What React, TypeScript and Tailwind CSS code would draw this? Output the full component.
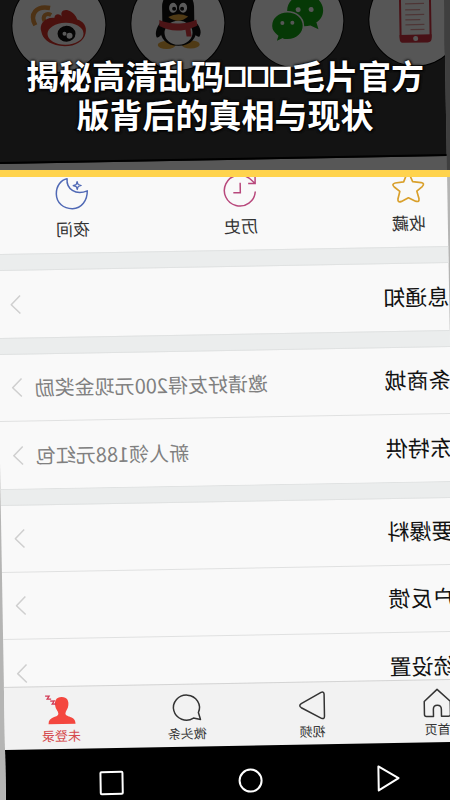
import React from 'react';

const cjk = "font-['Noto_Sans_CJK_SC',sans-serif]";

function Mirrored({ children, className = '' }: { children: React.ReactNode; className?: string }) {
  return <span className={`inline-block -scale-x-100 whitespace-nowrap ${className}`}>{children}</span>;
}

function Weibo() {
  return (
    <svg viewBox="0 5 93 93" className="h-full w-full" aria-hidden="true">
      <g fill="none" stroke="#dd8f3c" strokeLinecap="butt">
        <path d="M23 51C17 40 24 31 38 34" strokeWidth="4.5" />
        <path d="M32 47c-2-5 2-9 7-6" strokeWidth="4" />
      </g>
      <path d="M29 58C26 50 33 43 42 44C43 39 48 40 50 43C47 37 53 34 59 38C63 41 64 43 65 46C71 48 75 53 73 60C71 69 60 74 47 72C36 70 30 64 29 58Z" fill="#d5332a" />
      <ellipse cx="53" cy="60" rx="18" ry="11" fill="#f7f7f7" />
      <ellipse cx="54" cy="60" rx="9" ry="8" fill="#111" />
      <circle cx="52" cy="60" r="2" fill="#fff" />
      <circle cx="57" cy="62" r="3" fill="#fff" />
    </svg>
  );
}

function Penguin() {
  return (
    <svg viewBox="0 4 93 93" className="h-full w-full" aria-hidden="true">
      <ellipse cx="35" cy="72" rx="9" ry="4" fill="#e2a63c" />
      <ellipse cx="59" cy="72" rx="9" ry="4" fill="#e2a63c" />
      <path d="M30 48c-4 5-7 11-5 16 2 1 4-1 6-4zM63 48c5 5 8 11 5 16-2 1-4-1-6-4z" fill="#111" />
      <path d="M31 48V34a16 17 0 0 1 32 0v14c5 9 2 25-16 25s-21-16-16-25z" fill="#111" />
      <ellipse cx="47" cy="60" rx="14" ry="12" fill="#f7f7f7" />
      <path d="M28 47c10 5 28 5 37 0l1 6c-4 2-5 2-7 3l1 8h-5l-1-7c-10 2-19 0-26-4z" fill="#d63a40" />
      <ellipse cx="42" cy="35" rx="4" ry="5" fill="#fff" />
      <ellipse cx="52" cy="35" rx="4" ry="5" fill="#fff" />
      <circle cx="43" cy="36" r="2" fill="#111" />
      <circle cx="51" cy="36" r="2" fill="#111" />
      <path d="M37 44q10-5 20 0q-10 8-20 0z" fill="#e2a63c" />
    </svg>
  );
}

function Wechat() {
  return (
    <svg viewBox="1 0 93 93" className="h-full w-full" aria-hidden="true">
      <path d="M56 20c10 0 18 7 18 16 0 5-3 10-7 12l2 7-8-4c-13 3-23-5-23-15 0-9 8-16 18-16z" fill="#13a313" />
      <path d="M38 37c9 0 16 6 16 14s-7 14-16 14c-2 0-4 0-5-1l-7 3 2-6c-4-3-6-6-6-10 0-8 7-14 16-14z" fill="#13a313" stroke="#f7f7f7" strokeWidth="1.5" />
      <g fill="#f7f7f7">
        <circle cx="49" cy="35" r="2.5" /><circle cx="62" cy="35" r="2.5" />
        <circle cx="33" cy="48" r="2" /><circle cx="43" cy="48" r="2" />
      </g>
    </svg>
  );
}

function Handset() {
  return (
    <svg viewBox="1 2 93 93" className="h-full w-full" aria-hidden="true">
      <rect x="32" y="12" width="30" height="58" rx="4" fill="#f7f7f7" stroke="#cf3340" strokeWidth="2" />
      <path d="M31 64h32v4a4 4 0 0 1-4 4H35a4 4 0 0 1-4-4z" fill="#cf3340" />
      <circle cx="47" cy="68" r="2.5" fill="#f7f7f7" />
      <path d="M37 33h19M37 39h15M37 44h19M37 49h15M37 54h19M42 59h14" stroke="#d99" strokeWidth="1.3" />
    </svg>
  );
}

const line = 'h-8 w-8 fill-none overflow-visible';

function Moon() {
  return (
    <svg viewBox="0 0 32 32" className={line} stroke="#5069b5" strokeWidth="1.5" strokeLinejoin="round" aria-hidden="true">
      <path d="M11 1C10 11 19 18 31 13.500C31 23 25 31 16 31C7 31 0 25 0 16C0 8 5 2 11 1Z" />
      <path d="M21 4l1 3 3 1-3 1-1 3-1-3-3-1 3-1z" strokeWidth="1.2" />
    </svg>
  );
}

function History() {
  return (
    <svg viewBox="0 0 32 32" className={line} stroke="#b8487c" strokeWidth="1.5" aria-hidden="true">
      <path d="M31 17A15.500 15.500 0 1 1 25 3.500L31 9M31 2v7h-7M16 8v10H9" />
    </svg>
  );
}

function Star() {
  return (
    <svg viewBox="0 0 32 32" className={line} stroke="#d9a02c" strokeWidth="1.7" strokeLinejoin="round" aria-hidden="true">
      <path d="M16 1Q17 1 18 4L20.500 10L29 11Q33 12 30 15L24.500 19.500L26.500 27Q27 31 23 29.500L16 26L9 29.500Q5 31 5.500 27L7.500 19.500L2 15Q-1 12 3 11L11.500 10L14 4Q15 1 16 1Z" />
    </svg>
  );
}

const tools = [
  { label: '夜间', icon: <Moon /> },
  { label: '历史', icon: <History /> },
  { label: '收藏', icon: <Star /> },
];

const groups = [
  [{ label: '息通知', note: '' }],
  [
    { label: '条商城', note: '邀请好友得200元现金奖励' },
    { label: '东特供', note: '新人领188元红包' },
  ],
  [
    { label: '要爆料', note: '' },
    { label: '户反馈', note: '' },
    { label: '统设置', note: '' },
  ],
];

const tabIcon = 'h-7 w-7 fill-none overflow-visible';

const tabs = [
  {
    label: '未登录',
    color: 'text-[#d5494c]',
    icon: (
      <svg viewBox="0 0 28 28" className={tabIcon} aria-hidden="true">
        <path d="M14.500 1C20 1 22 5 21 10C21 13 18 15 18 18C19 22 28 20 28 28H1C1 20 10 22 11 18C11 15 8 13 8 10C7 5 9 1 14.500 1Z" fill="#f4473f" />
        <path d="M-2 0h4l-2 3h4M3 5h4l-2 3h4" stroke="#d23a55" strokeWidth="1.3" />
      </svg>
    ),
  },
  {
    label: '微头条',
    color: 'text-[#333]',
    icon: (
      <svg viewBox="0 0 28 28" className={tabIcon} stroke="#333" strokeWidth="1.5" strokeLinejoin="round" aria-hidden="true">
        <path d="M26 19A13 12.500 0 1 0 21 24.500L28 26Z" />
      </svg>
    ),
  },
  {
    label: '视频',
    color: 'text-[#333]',
    icon: (
      <svg viewBox="0 0 28 28" className={tabIcon} stroke="#333" strokeWidth="1.5" strokeLinejoin="round" aria-hidden="true">
        <path d="M3 12L23 1Q26 0 26 3V25Q26 28 23 27L3 16Q0 14 3 12Z" />
      </svg>
    ),
  },
  {
    label: '首页',
    color: 'text-[#333]',
    icon: (
      <svg viewBox="0 0 28 28" className={tabIcon} stroke="#333" strokeWidth="1.5" strokeLinejoin="round" aria-hidden="true">
        <path d="M14 0L1 12V25Q1 27 3 27H10V20Q10 16 14 16T18 20V27H25Q27 27 27 25V12Z" />
      </svg>
    ),
  },
];

function Row({ label, note }: { label: string; note: string }) {
  return (
    <a href="#" className="flex h-[67px] items-center border-b border-[#e0e1e1] pl-[13px] last:border-b-0">
      <svg viewBox="0 0 11 20" className="h-5 w-[11px] fill-none stroke-[#cfcfcf]" strokeWidth="1.5" aria-hidden="true">
        <path d="M10 1L1 10L10 19" />
      </svg>
      {note && <Mirrored className="ml-3 text-[20px] leading-7 text-[#808080]">{note}</Mirrored>}
      <Mirrored className="mb-1 ml-auto text-[22px] leading-8 text-[#111]">{label}</Mirrored>
    </a>
  );
}

export default function App() {
  return (
    <main className={`relative h-screen overflow-hidden bg-[#b5b5b4] ${cjk}`}>
      <div className="-mx-px -mt-2 -rotate-1 overflow-hidden bg-[#f9f9f9]">
        <div className="flex h-[168px] gap-[26px] overflow-hidden border-b-2 border-black bg-[#383838] pl-5">
          {[Weibo, Penguin, Wechat, Handset].map((Logo, i) => (
            <div key={i} className="-mt-4 h-[93px] w-[93px] shrink-0 rounded-full bg-[#f7f7f7] ring-1 ring-black">
              <Logo />
            </div>
          ))}
        </div>

        <div className="flex h-[90px] justify-between pt-[15px] pr-[19px] pl-[57px]">
          {tools.map((t) => (
            <button key={t.label} className="flex w-10 flex-col items-center gap-[9px]">
              {t.icon}
              <Mirrored className="text-[17px] leading-5 text-[#333]">{t.label}</Mirrored>
            </button>
          ))}
        </div>

        {groups.map((rows, i) => (
          <section key={i} className={i === 2 ? 'h-[198px] overflow-hidden' : ''}>
            <div className="h-[17px] border-y border-[#e0e2e2] bg-[#ebeded]" />
            {rows.map((r) => (
              <Row key={r.label} {...r} />
            ))}
          </section>
        ))}

        <nav className="-mr-11 -ml-1.5 grid h-[63px] grid-cols-4 border-t border-[#d4d4d4] bg-[#f2f2f2] pt-[9px]">
          {tabs.map((t) => (
            <button key={t.label} className="flex flex-col items-center gap-0.5">
              {t.icon}
              <Mirrored className={`text-[13px] leading-5 ${t.color}`}>{t.label}</Mirrored>
            </button>
          ))}
        </nav>

        <div className="flex h-[69px] items-center justify-between bg-black pr-[57px] pl-[94px]">
          <button aria-label="Recent apps" className="h-6 w-6 rounded-xs border-2 border-white" />
          <button aria-label="Home" className="h-6 w-6 rounded-full border-2 border-white" />
          <button aria-label="Back" className="h-7 w-6">
            <svg viewBox="0 0 24 28" className="h-7 w-6 fill-none stroke-white" strokeWidth="2" strokeLinejoin="round" aria-hidden="true">
              <path d="M2 2L22 14L2 26Z" />
            </svg>
          </button>
        </div>
      </div>

      <header className="absolute inset-x-0 top-0 flex h-[177px] items-center justify-center border-b-[7px] border-[#ffd34d] bg-black/65 bg-clip-padding px-5 pt-5">
        <h1 className="text-center text-[33px] leading-[39px] font-bold text-white [text-shadow:0_0_3px_#000,0_0_3px_#000,1px_1px_2px_#000]">
          揭秘高清乱码
          <span className="align-[6px] font-['DejaVu_Sans',sans-serif] text-2xl leading-none [-webkit-text-stroke:2px_white]">□□□</span>
          毛片官方
          <br />
          版背后的真相与现状
        </h1>
      </header>
    </main>
  );
}
